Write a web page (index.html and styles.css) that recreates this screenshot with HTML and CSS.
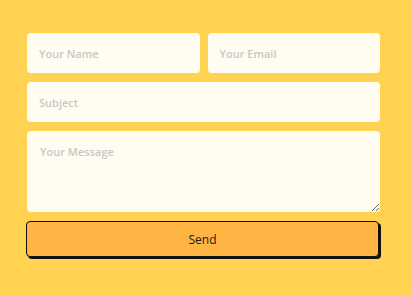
FILE: index.html
```html
<!DOCTYPE html>
<html lang="en">
<head>
    <meta charset="UTF-8">
    <meta name="viewport" content="width=device-width, initial-scale=1.0">
    <title>Contact</title>
    <link rel="stylesheet" href="styles.css">
</head>
<body>
    <form class="contact-form" onsubmit="return false">
        <!-- name + email -->
        <div class="form-row">
            <input type="text" placeholder="Your Name">
            <input type="email" placeholder="Your Email">
        </div>

        <input type="text" placeholder="Subject">

        <textarea placeholder="Your Message"></textarea>

        <button type="submit">Send</button>
    </form>
</body>
</html>
```

FILE: styles.css
```css
* {
    margin: 0;
    padding: 0;
    box-sizing: border-box;
}

body {
    font-family: 'Open Sans', 'Liberation Sans', sans-serif;
    background: #ffd351;
    height: 100vh;
}

.contact-form {
    display: flex;
    flex-direction: column;
    gap: 9px;
    width: 353px;
    margin-left: 27px;
    padding-top: 33px;
}

.form-row {
    display: flex;
    gap: 8px;
}

.form-row input {
    flex: 1;
    min-width: 0;
}

input,
textarea {
    width: 100%;
    height: 40px;
    padding: 0 12px;
    border: none;
    border-radius: 4px;
    background: #fffdf1;
    font-family: inherit;
    font-size: 11px;
    font-weight: 600;
    color: #333;
}

textarea {
    height: 81px;
    padding: 13px 13px;
    resize: vertical;
}

input::placeholder,
textarea::placeholder {
    color: #cdc5c5;
}

input:focus,
textarea:focus {
    outline: none;
}

button {
    width: 100%;
    height: 36px;
    margin: 0 0 0 -1px;
    border: 1.5px solid #111;
    border-radius: 4px;
    background: #ffb444;
    box-shadow: 2px 2px 0 #111;
    font-family: inherit;
    font-size: 12px;
    font-weight: 500;
    color: #1a1a1a;
    cursor: pointer;
}
```
